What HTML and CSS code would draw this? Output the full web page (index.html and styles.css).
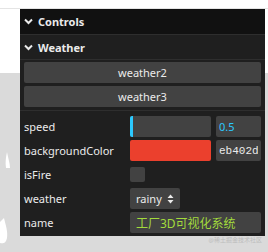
FILE: index.html
```html
<!DOCTYPE html>
<html lang="en">

<head>
    <meta charset="UTF-8">
    <meta name="viewport" content="width=device-width, initial-scale=1.0">
    <title>Weather Controls</title>
    <link rel="stylesheet" href="styles.css">
</head>

<body>
    <div class="scene">
        <div class="scene-top"></div>
        <div class="scene-floor"></div>
    </div>

    <!-- snow drop in the 3d scene -->
    <svg class="drop" width="14" height="100" viewBox="0 0 14 100">
        <path d="M7 0 C8 6 10 11 10 16 L6 16 C5 10 6 5 7 0 Z" fill="#fff" />
        <path d="M4 66 C6 74 8 80 7 86 C6 91 3 92 0 91 L0 70 Z" fill="#fff" />
    </svg>
    <span class="watermark">@稀土掘金技术社区</span>

    <div class="gui">
        <div class="title root-title">
            <svg class="chevron" width="9" height="7" viewBox="0 0 9 7"><path d="M1 1.5 L4.5 5 L8 1.5" /></svg>
            Controls
        </div>

        <div class="folder">
            <div class="title folder-title">
                <svg class="chevron" width="9" height="7" viewBox="0 0 9 7"><path d="M1 1.5 L4.5 5 L8 1.5" /></svg>
                Weather
            </div>
            <div class="children">
                <button class="btn">weather2</button>
                <button class="btn">weather3</button>
            </div>
        </div>

        <div class="controllers">
            <div class="ctrl">
                <span class="name">speed</span>
                <div class="widget">
                    <div class="slider"><span class="fill" style="width: 4%"></span></div>
                    <input class="side-input number" value="0.5">
                </div>
            </div>
            <div class="ctrl">
                <span class="name">backgroundColor</span>
                <div class="widget">
                    <div class="swatch"></div>
                    <input class="side-input hex" value="eb402d">
                </div>
            </div>
            <div class="ctrl">
                <span class="name">isFire</span>
                <div class="widget">
                    <span class="checkbox"></span>
                </div>
            </div>
            <div class="ctrl">
                <span class="name">weather</span>
                <div class="widget">
                    <div class="select">
                        rainy
                        <svg width="7" height="10" viewBox="0 0 7 10"><path d="M3.5 0.5 L6.5 4 L0.5 4 Z M3.5 9.5 L6.5 6 L0.5 6 Z" fill="#ebebeb" /></svg>
                    </div>
                </div>
            </div>
            <div class="ctrl">
                <span class="name">name</span>
                <div class="widget">
                    <input class="text" value="工厂3D可视化系统">
                </div>
            </div>
        </div>
    </div>
</body>

</html>
```

FILE: styles.css
```css
* {
    box-sizing: border-box;
}

body {
    margin: 0;
    width: 268px;
    height: 252px;
    position: relative;
    overflow: hidden;
    background: #fff;
    font-family: "Noto Sans", "Noto Sans CJK SC", sans-serif;
}

.scene {
    display: flex;
    flex-direction: column;
    height: 252px;
}

.scene-top {
    height: 65px;
    margin-top: 8px;
    border-top: 1px solid #e4e4e4;
}

.scene-floor {
    flex: 1;
    background: #dadada;
}

.drop {
    position: absolute;
    left: 0;
    top: 152px;
}

.watermark {
    position: absolute;
    right: 6px;
    bottom: 8px;
    font-size: 6px;
    color: #bdbdbd;
}

.gui {
    position: absolute;
    left: 20px;
    top: 9px;
    width: 245px;
    background: #1f1f1f;
    color: #ebebeb;
    font-size: 11px;
}

.title {
    display: flex;
    align-items: center;
    gap: 5px;
    height: 25px;
    padding: 0 4px;
    font-size: 11px;
    font-weight: 700;
}

.chevron path {
    fill: none;
    stroke: #ebebeb;
    stroke-width: 2;
}

.root-title {
    background: #111;
}

.folder-title {
    height: 26px;
    border-top: 1px solid #2e2e2e;
    border-bottom: 1px solid #2e2e2e;
}

.children {
    display: flex;
    flex-direction: column;
    gap: 3px;
    padding: 2px 4px 3px;
    border-bottom: 1px solid #2e2e2e;
}

.btn {
    height: 21px;
    padding: 0;
    border: none;
    border-radius: 2px;
    background: #424242;
    color: #ebebeb;
    font-family: inherit;
    font-size: 11px;
}

.controllers {
    display: flex;
    flex-direction: column;
    gap: 3px;
    padding: 5px 0 3px;
}

.ctrl {
    display: flex;
    align-items: center;
    height: 21px;
    padding: 0 4px;
}

.name {
    width: 106px;
    flex-shrink: 0;
}

.widget {
    flex: 1;
    display: flex;
    align-items: center;
    gap: 5px;
    height: 21px;
}

.slider,
.swatch {
    flex: 1;
    height: 21px;
    border-radius: 2px;
    background: #424242;
    overflow: hidden;
}

.fill {
    display: block;
    height: 100%;
    background: #2cc9ff;
}

.swatch {
    background: #eb402d;
}

.side-input,
.text {
    height: 21px;
    border: none;
    border-radius: 2px;
    background: #424242;
    padding: 0 3px;
    font-family: inherit;
    font-size: 11px;
    outline: none;
}

.side-input {
    width: 45px;
}

.number {
    color: #2cc9ff;
}

.hex {
    color: #ebebeb;
    font-family: "Liberation Mono", monospace;
}

.checkbox {
    width: 15px;
    height: 15px;
    border-radius: 2px;
    background: #424242;
}

.select {
    display: flex;
    align-items: center;
    gap: 5px;
    height: 21px;
    padding: 0 6px;
    border-radius: 2px;
    background: #424242;
}

.text {
    width: 100%;
    padding: 0 6px;
    font-size: 12px;
    color: #a2db3c;
}
```
